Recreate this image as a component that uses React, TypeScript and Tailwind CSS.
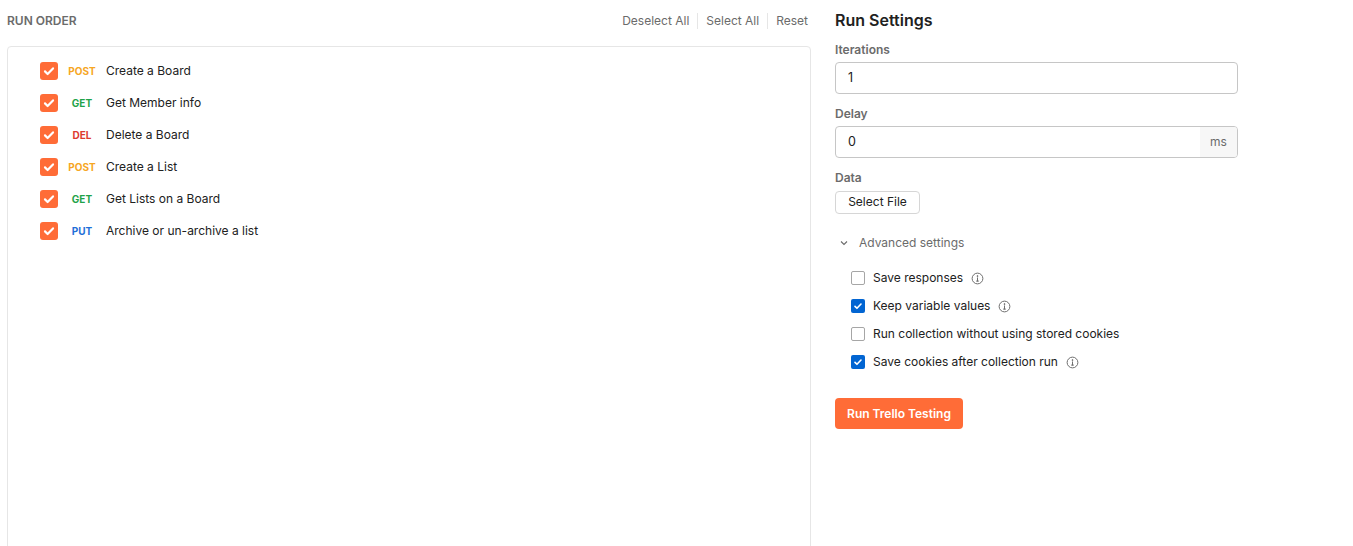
const requests = [
  { method: 'POST', name: 'Create a Board', color: 'text-[#f6a623]' },
  { method: 'GET', name: 'Get Member info', color: 'text-[#1fa34a]' },
  { method: 'DEL', name: 'Delete a Board', color: 'text-[#dd3a2f]' },
  { method: 'POST', name: 'Create a List', color: 'text-[#f6a623]' },
  { method: 'GET', name: 'Get Lists on a Board', color: 'text-[#1fa34a]' },
  { method: 'PUT', name: 'Archive or un-archive a list', color: 'text-[#1f6fd8]' },
]

const options = [
  { label: 'Save responses', checked: false, info: true },
  { label: 'Keep variable values', checked: true, info: true },
  { label: 'Run collection without using stored cookies', checked: false, info: false },
  { label: 'Save cookies after collection run', checked: true, info: true },
]

function Tick({ className }: { className: string }) {
  return (
    <svg className={className} viewBox="0 0 16 16" fill="none" stroke="white" strokeWidth={2.2} strokeLinecap="round" strokeLinejoin="round">
      <path d="M4 8.4l2.6 2.6L12 5.4" />
    </svg>
  )
}

function InfoIcon() {
  return (
    <svg className="w-[13px] h-[13px] ml-2" viewBox="0 0 16 16" fill="none" stroke="#6b6b6b" strokeWidth={1.2}>
      <circle cx="8" cy="8" r="6.6" />
      <path d="M8 7.2v4" strokeLinecap="round" />
      <path d="M6.8 11.2h2.4" strokeLinecap="round" />
      <circle cx="8" cy="5" r="0.6" fill="#6b6b6b" />
    </svg>
  )
}

export default function App() {
  return (
    <div className="flex h-[546px] overflow-hidden bg-white pl-[7px] text-[#212121]" style={{ fontFamily: 'Inter, "Noto Sans", sans-serif' }}>
      <div className="flex flex-col w-[804px] shrink-0">
        <div className="flex shrink-0 items-center justify-between h-[40px] pr-[3px] pt-[1px]">
          <span className="text-[12px] font-semibold text-[#6b6b6b] uppercase">Run Order</span>
          <div className="flex items-center text-[12px] text-[#6b6b6b]">
            <span>Deselect All</span>
            <span className="w-px h-[16px] bg-[#e6e6e6] mx-2" />
            <span>Select All</span>
            <span className="w-px h-[16px] bg-[#e6e6e6] mx-2" />
            <span>Reset</span>
          </div>
        </div>
        <div className="mt-[6px] h-[540px] shrink-0 border border-[#e6e6e6] rounded-t-[4px] pt-[8px] pl-[32px]">
          {requests.map((r, i) => (
            <div key={i} className="flex items-center h-8">
              <span className="w-[18px] h-[18px] rounded-[3px] bg-[#ff6c37] flex items-center justify-center">
                <Tick className="w-[16px] h-[16px]" />
              </span>
              <span className={`w-[40px] ml-1 text-center text-[10px] font-bold ${r.color}`}>{r.method}</span>
              <span className="ml-1 text-[12px] text-[#212121]">{r.name}</span>
            </div>
          ))}
        </div>
      </div>

      <div className="flex flex-col ml-[24px] w-[403px] pt-[8px]">
        <h2 className="text-[16px] leading-6 font-semibold text-[#212121]">Run Settings</h2>

        <label className="mt-[10px] text-[12px] leading-4 font-semibold text-[#6b6b6b]">Iterations</label>
        <div className="mt-[4px] h-[32px] border border-[#c6c6c6] rounded-[4px] flex items-center px-3 text-[12.5px]">1</div>

        <label className="mt-[12px] text-[12px] leading-4 font-semibold text-[#6b6b6b]">Delay</label>
        <div className="mt-[4px] h-[32px] border border-[#c6c6c6] rounded-[4px] flex items-stretch text-[12.5px] overflow-hidden">
          <span className="flex-1 flex items-center px-3">0</span>
          <span className="w-[37px] bg-[#f7f7f7] flex items-center justify-center text-[#6b6b6b] text-[12px]">ms</span>
        </div>

        <label className="mt-[12px] text-[12px] leading-4 font-semibold text-[#6b6b6b]">Data</label>
        <button className="mt-[5px] self-start h-[23px] w-[85px] border border-[#d6d6d6] rounded-[4px] text-[12px] leading-none text-[#212121] pb-px">
          Select File
        </button>

        <div className="mt-[19px] h-[20px] flex items-center text-[12px] text-[#6b6b6b]">
          <svg className="w-[10px] h-[10px] ml-[4px]" viewBox="0 0 10 10" fill="none" stroke="#6b6b6b" strokeWidth={1.1}>
            <path d="M2 3.5l3 3 3-3" />
          </svg>
          <span className="ml-[10px]">Advanced settings</span>
        </div>

        <div className="mt-[11px] pl-[16px] flex flex-col">
          {options.map((o, i) => (
            <div key={i} className="flex items-center h-[28px] text-[12px] text-[#212121]">
              {o.checked ? (
                <span className="w-[14px] h-[14px] rounded-[2px] bg-[#0265d2] flex items-center justify-center">
                  <Tick className="w-[12px] h-[12px]" />
                </span>
              ) : (
                <span className="w-[14px] h-[14px] rounded-[2px] border border-[#a6a6a6] bg-white" />
              )}
              <span className="ml-[8px]">{o.label}</span>
              {o.info && <InfoIcon />}
            </div>
          ))}
        </div>

        <button className="mt-[22px] self-start h-[31px] w-[128px] rounded-[4px] bg-[#ff6c37] text-white text-[12px] font-semibold">
          Run Trello Testing
        </button>
      </div>
    </div>
  )
}
